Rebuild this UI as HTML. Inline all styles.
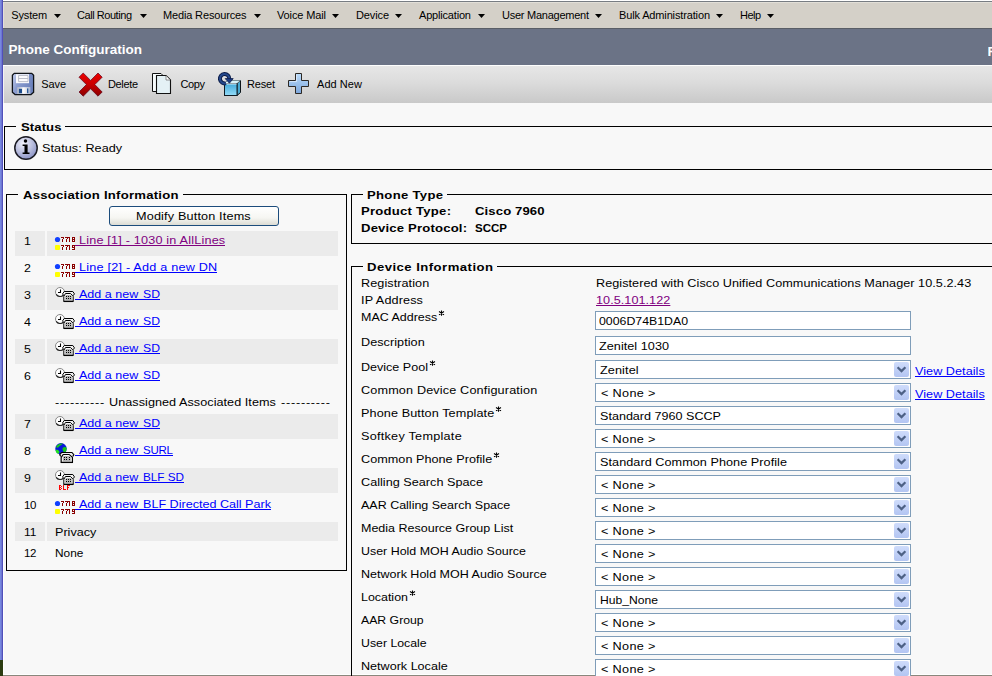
<!DOCTYPE html>
<html><head><meta charset="utf-8"><title>Phone Configuration</title>
<style>
html,body{margin:0;padding:0;width:992px;height:676px;overflow:hidden;}
.page{position:absolute;left:0;top:0;width:992px;height:676px;overflow:hidden;background:#f8f8f8;}
body{width:992px;height:676px;overflow:hidden;position:relative;background:#f8f8f8;font-family:"Liberation Sans",sans-serif;font-size:12px;color:#000;}
.abs{position:absolute;}
svg{position:absolute;overflow:visible;}
.t{position:absolute;white-space:nowrap;color:#000;transform-origin:0 0;}
.m{font-size:11px;line-height:14px;}
.b{font-size:11.5px;line-height:14px;}
.bb{font-size:11.5px;line-height:14px;font-weight:bold;}
.lg{font-size:11.5px;line-height:14px;font-weight:bold;}
.ti{font-size:13.5px;line-height:16px;font-weight:bold;color:#fff;}
.arr{position:absolute;top:14px;}
.fs{position:absolute;border:1px solid #000;box-sizing:border-box;}
.gap{position:absolute;background:#f8f8f8;height:3px;}
.rc{position:absolute;background:#ebebeb;}
.inp{position:absolute;left:595px;width:316px;height:19px;border:1px solid #7f9db9;background:#fff;box-sizing:border-box;}
.dd{position:absolute;right:1px;top:1px;}
.btn{position:absolute;left:109px;top:206px;width:170px;height:20px;box-sizing:border-box;border:1px solid #1c4c7c;border-radius:3px;background:linear-gradient(#ffffff 0%,#f6f6f2 60%,#dcdcd4 100%);}

</style></head><body>
<div class="page">
<!-- window chrome -->
<div class="abs" style="left:0;top:0;width:3px;height:660px;background:linear-gradient(90deg,#7688e0 0,#7688e0 33.3%,#7078d0 33.3%,#7078d0 66.6%,#5050bc 66.6%);"></div>
<div class="abs" style="left:0;top:660px;width:3px;height:16px;background:#2c3c12;"></div>
<div class="abs" style="left:3px;top:103px;width:1px;height:573px;background:#fff;"></div>
<div class="abs" style="left:3px;top:0;width:989px;height:1px;background:#fff;"></div>
<div class="abs" style="left:3px;top:1px;width:989px;height:1px;background:#777c82;"></div>
<!-- menu bar -->
<div class="abs" style="left:3px;top:2px;width:989px;height:26px;background:#d4d0c8;box-shadow:inset 1px 1px 0 #e2dfd8;"></div>
<div class="abs" style="left:3px;top:28px;width:989px;height:1px;background:#5a5e66;"></div>
<!-- title bar -->
<div class="abs" style="left:3px;top:29px;width:989px;height:36px;background:#6b7386;"></div>
<div class="abs" style="left:987.5px;top:43.5px;width:5px;height:16px;overflow:hidden;"><span class="t ti" style="left:0;top:0;">R</span></div>
<!-- toolbar -->
<div class="abs" style="left:3px;top:65px;width:989px;height:38px;box-shadow:inset 1px 0 0 #f2f2f2;background:linear-gradient(#f0f0f0 0,#e6e6e6 3%,#dcdcdc 45%,#c9c9c9 100%);"></div>
<div class="abs" style="left:3px;top:65px;width:989px;height:1px;background:#fdfdfd;"></div>
<!-- bottom edge -->
<div class="abs" style="left:3px;top:674px;width:989px;height:1px;background:#fff;"></div>
<div class="abs" style="left:3px;top:675px;width:989px;height:1px;background:#8a877c;"></div>
<!-- fieldsets -->
<div class="fs" style="left:4px;top:126px;width:1000px;height:44px;"></div>
<div class="gap" style="left:16px;top:125px;width:49px;"></div>
<div class="fs" style="left:6px;top:194px;width:341px;height:377px;"></div>
<div class="gap" style="left:18px;top:193px;width:165px;"></div>
<div class="fs" style="left:351px;top:194px;width:700px;height:50px;"></div>
<div class="gap" style="left:363px;top:193px;width:84px;"></div>
<div class="fs" style="left:351px;top:266px;width:700px;height:500px;"></div>
<div class="gap" style="left:363px;top:265px;width:134px;"></div>
<div class="btn"></div>
<div class="rc" style="left:15px;top:231px;width:30px;height:25px"></div><div class="rc" style="left:47px;top:231px;width:291px;height:25px"></div>
<div class="rc" style="left:15px;top:285px;width:30px;height:25px"></div><div class="rc" style="left:47px;top:285px;width:291px;height:25px"></div>
<div class="rc" style="left:15px;top:339px;width:30px;height:25px"></div><div class="rc" style="left:47px;top:339px;width:291px;height:25px"></div>
<div class="rc" style="left:15px;top:414px;width:30px;height:25px"></div><div class="rc" style="left:47px;top:414px;width:291px;height:25px"></div>
<div class="rc" style="left:15px;top:468px;width:30px;height:25px"></div><div class="rc" style="left:47px;top:468px;width:291px;height:25px"></div>
<div class="rc" style="left:15px;top:522px;width:30px;height:19px"></div><div class="rc" style="left:47px;top:522px;width:291px;height:19px"></div>
<div class="abs" style="left:75px;top:245px;width:150px;height:1px;background:#800080"></div>
<div class="abs" style="left:75px;top:272px;width:142px;height:1px;background:#0000ff"></div>
<div class="abs" style="left:75px;top:299px;width:85px;height:1px;background:#0000ff"></div>
<div class="abs" style="left:75px;top:326px;width:85px;height:1px;background:#0000ff"></div>
<div class="abs" style="left:75px;top:353px;width:85px;height:1px;background:#0000ff"></div>
<div class="abs" style="left:75px;top:380px;width:85px;height:1px;background:#0000ff"></div>
<div class="abs" style="left:75px;top:428px;width:85px;height:1px;background:#0000ff"></div>
<div class="abs" style="left:75px;top:455px;width:98px;height:1px;background:#0000ff"></div>
<div class="abs" style="left:75px;top:482px;width:109px;height:1px;background:#0000ff"></div>
<div class="abs" style="left:75px;top:509px;width:196px;height:1px;background:#0000ff"></div>
<div class="inp" style="top:311px"></div>
<div class="inp" style="top:336px"></div>
<div class="inp" style="top:360px"><svg class="dd" width="15" height="15" viewBox="0 0 15 15"><rect width="15" height="15" rx="2" fill="url(#gdd)"/><path d="M3.6 5.2L7.5 9.1L11.4 5.2" fill="none" stroke="#4d6185" stroke-width="2.2"/></svg></div>
<div class="inp" style="top:383px"><svg class="dd" width="15" height="15" viewBox="0 0 15 15"><rect width="15" height="15" rx="2" fill="url(#gdd)"/><path d="M3.6 5.2L7.5 9.1L11.4 5.2" fill="none" stroke="#4d6185" stroke-width="2.2"/></svg></div>
<div class="inp" style="top:406px"><svg class="dd" width="15" height="15" viewBox="0 0 15 15"><rect width="15" height="15" rx="2" fill="url(#gdd)"/><path d="M3.6 5.2L7.5 9.1L11.4 5.2" fill="none" stroke="#4d6185" stroke-width="2.2"/></svg></div>
<div class="inp" style="top:429px"><svg class="dd" width="15" height="15" viewBox="0 0 15 15"><rect width="15" height="15" rx="2" fill="url(#gdd)"/><path d="M3.6 5.2L7.5 9.1L11.4 5.2" fill="none" stroke="#4d6185" stroke-width="2.2"/></svg></div>
<div class="inp" style="top:452px"><svg class="dd" width="15" height="15" viewBox="0 0 15 15"><rect width="15" height="15" rx="2" fill="url(#gdd)"/><path d="M3.6 5.2L7.5 9.1L11.4 5.2" fill="none" stroke="#4d6185" stroke-width="2.2"/></svg></div>
<div class="inp" style="top:475px"><svg class="dd" width="15" height="15" viewBox="0 0 15 15"><rect width="15" height="15" rx="2" fill="url(#gdd)"/><path d="M3.6 5.2L7.5 9.1L11.4 5.2" fill="none" stroke="#4d6185" stroke-width="2.2"/></svg></div>
<div class="inp" style="top:498px"><svg class="dd" width="15" height="15" viewBox="0 0 15 15"><rect width="15" height="15" rx="2" fill="url(#gdd)"/><path d="M3.6 5.2L7.5 9.1L11.4 5.2" fill="none" stroke="#4d6185" stroke-width="2.2"/></svg></div>
<div class="inp" style="top:521px"><svg class="dd" width="15" height="15" viewBox="0 0 15 15"><rect width="15" height="15" rx="2" fill="url(#gdd)"/><path d="M3.6 5.2L7.5 9.1L11.4 5.2" fill="none" stroke="#4d6185" stroke-width="2.2"/></svg></div>
<div class="inp" style="top:544px"><svg class="dd" width="15" height="15" viewBox="0 0 15 15"><rect width="15" height="15" rx="2" fill="url(#gdd)"/><path d="M3.6 5.2L7.5 9.1L11.4 5.2" fill="none" stroke="#4d6185" stroke-width="2.2"/></svg></div>
<div class="inp" style="top:567px"><svg class="dd" width="15" height="15" viewBox="0 0 15 15"><rect width="15" height="15" rx="2" fill="url(#gdd)"/><path d="M3.6 5.2L7.5 9.1L11.4 5.2" fill="none" stroke="#4d6185" stroke-width="2.2"/></svg></div>
<div class="inp" style="top:590px"><svg class="dd" width="15" height="15" viewBox="0 0 15 15"><rect width="15" height="15" rx="2" fill="url(#gdd)"/><path d="M3.6 5.2L7.5 9.1L11.4 5.2" fill="none" stroke="#4d6185" stroke-width="2.2"/></svg></div>
<div class="inp" style="top:613px"><svg class="dd" width="15" height="15" viewBox="0 0 15 15"><rect width="15" height="15" rx="2" fill="url(#gdd)"/><path d="M3.6 5.2L7.5 9.1L11.4 5.2" fill="none" stroke="#4d6185" stroke-width="2.2"/></svg></div>
<div class="inp" style="top:636px"><svg class="dd" width="15" height="15" viewBox="0 0 15 15"><rect width="15" height="15" rx="2" fill="url(#gdd)"/><path d="M3.6 5.2L7.5 9.1L11.4 5.2" fill="none" stroke="#4d6185" stroke-width="2.2"/></svg></div>
<div class="inp" style="top:659px"><svg class="dd" width="15" height="15" viewBox="0 0 15 15"><rect width="15" height="15" rx="2" fill="url(#gdd)"/><path d="M3.6 5.2L7.5 9.1L11.4 5.2" fill="none" stroke="#4d6185" stroke-width="2.2"/></svg></div>
<svg style="left:438px;top:310px" width="7" height="6" viewBox="0 0 7 6"><path d="M3.5 .4V5.8 M1 1.5L6 4.7 M6 1.5L1 4.7" stroke="#000" stroke-width="1.05" fill="none"/></svg>
<svg style="left:429px;top:360px" width="7" height="6" viewBox="0 0 7 6"><path d="M3.5 .4V5.8 M1 1.5L6 4.7 M6 1.5L1 4.7" stroke="#000" stroke-width="1.05" fill="none"/></svg>
<svg style="left:495px;top:406px" width="7" height="6" viewBox="0 0 7 6"><path d="M3.5 .4V5.8 M1 1.5L6 4.7 M6 1.5L1 4.7" stroke="#000" stroke-width="1.05" fill="none"/></svg>
<svg style="left:493px;top:452px" width="7" height="6" viewBox="0 0 7 6"><path d="M3.5 .4V5.8 M1 1.5L6 4.7 M6 1.5L1 4.7" stroke="#000" stroke-width="1.05" fill="none"/></svg>
<svg style="left:409px;top:590px" width="7" height="6" viewBox="0 0 7 6"><path d="M3.5 .4V5.8 M1 1.5L6 4.7 M6 1.5L1 4.7" stroke="#000" stroke-width="1.05" fill="none"/></svg>
<svg width="0" height="0" style="position:absolute"><defs>
<linearGradient id="gdd" x1="0" y1="0" x2="0" y2="1"><stop offset="0" stop-color="#cfdcfb"/><stop offset="1" stop-color="#b3c5f2"/></linearGradient>
<linearGradient id="gsave" x1="0" y1="0" x2="1" y2=".35"><stop offset="0" stop-color="#ccd6f2"/><stop offset=".35" stop-color="#8c9ed0"/><stop offset="1" stop-color="#6c82bc"/></linearGradient>
<linearGradient id="gshut" x1="0" y1="0" x2="1" y2="0"><stop offset="0" stop-color="#a8b0c4"/><stop offset=".5" stop-color="#fcfcfc"/><stop offset="1" stop-color="#b4bcd0"/></linearGradient>
<linearGradient id="gx" x1="0" y1="0" x2="0" y2="1"><stop offset="0" stop-color="#ee0000"/><stop offset=".5" stop-color="#c80000"/><stop offset="1" stop-color="#8a0000"/></linearGradient>
<linearGradient id="gplus" x1="0" y1="0" x2="0" y2="1"><stop offset="0" stop-color="#bcdcfa"/><stop offset="1" stop-color="#7ca6dc"/></linearGradient>
<linearGradient id="gcube" x1="0" y1="0" x2="0" y2="1"><stop offset="0" stop-color="#40a8d8"/><stop offset="1" stop-color="#94dcf8"/></linearGradient>
<radialGradient id="ginfo" cx="0.38" cy="0.3" r="0.75"><stop offset="0" stop-color="#f4f4fc"/><stop offset="1" stop-color="#8890c4"/></radialGradient>
</defs></svg>
<!-- menu arrows -->
<svg class="arr" style="left:54px" width="7" height="4"><path d="M0 0H7L3.5 4Z"/></svg>
<svg class="arr" style="left:140px" width="7" height="4"><path d="M0 0H7L3.5 4Z"/></svg>
<svg class="arr" style="left:254px" width="7" height="4"><path d="M0 0H7L3.5 4Z"/></svg>
<svg class="arr" style="left:332px" width="7" height="4"><path d="M0 0H7L3.5 4Z"/></svg>
<svg class="arr" style="left:395px" width="7" height="4"><path d="M0 0H7L3.5 4Z"/></svg>
<svg class="arr" style="left:478px" width="7" height="4"><path d="M0 0H7L3.5 4Z"/></svg>
<svg class="arr" style="left:595px" width="7" height="4"><path d="M0 0H7L3.5 4Z"/></svg>
<svg class="arr" style="left:716px" width="7" height="4"><path d="M0 0H7L3.5 4Z"/></svg>
<svg class="arr" style="left:767px" width="7" height="4"><path d="M0 0H7L3.5 4Z"/></svg>
<!-- save -->
<svg style="left:12px;top:73px" width="22" height="22" viewBox="0 0 22 22">
<path d="M2.2 .4H19.8L21.6 2.2V19.2L19 21.6H3L.4 19.2V2.2Z" fill="url(#gsave)" stroke="#101418" stroke-width="1.3" stroke-linejoin="round"/>
<rect x="4" y="1.2" width="13" height="9" fill="#fbfbfd"/>
<path d="M6.6 2.5H16V8.6H6.6Z M6.6 5.5H16" fill="none" stroke="#b4b8c4" stroke-width=".9"/>
<rect x="5" y="14.2" width="13.3" height="6.7" fill="url(#gshut)"/>
<rect x="6.9" y="15.8" width="3.1" height="4.4" fill="#1c4c8c"/><rect x="15" y="15.4" width="1.4" height="4.8" fill="#2c5c9c"/><rect x="17" y="15.4" width=".7" height="4.8" fill="#a8b8d4"/>
</svg>
<!-- delete -->
<svg style="left:79px;top:72.8px" width="24" height="24" viewBox="0 0 24 24">
<path d="M4.2 0.0L11.6 7.4L19.0 0.0L23.2 4.2L15.8 11.6L23.2 19.0L19.0 23.2L11.6 15.8L4.2 23.2L0.0 19.0L7.4 11.6L0.0 4.2Z" fill="url(#gx)" stroke="#5c0018" stroke-width=".7"/>
</svg>
<!-- copy -->
<svg style="left:152px;top:73px" width="20" height="22" viewBox="0 0 20 22">
<path d="M.5 .5H9L11.5 3V18.5H.5Z" fill="#f6fbfc" stroke="#111" stroke-width="1"/>
<path d="M4.5 2.5H14L18.5 7V20.5H4.5Z" fill="#e4f1f5" stroke="#111" stroke-width="1.1"/>
<path d="M14 2.8V7H18.2" fill="#fff" stroke="#777" stroke-width=".8"/>
</svg>
<!-- reset -->
<svg style="left:217px;top:72px" width="25" height="25" viewBox="0 0 25 25">
<path d="M20 11.5L23.5 8.5V20.5L20 23.5Z" fill="#48a8d0" stroke="#0c1418" stroke-width="1"/>
<path d="M7.5 11.5L10.5 8.5H23.5L20 11.5Z" fill="#d8f4fc" stroke="#506870" stroke-width=".7"/>
<rect x="7.5" y="11.5" width="12.5" height="12" fill="url(#gcube)" stroke="#101c24" stroke-width="1"/>
<path d="M8 11.9H19.6" stroke="#f4fcff" stroke-width="1"/>
<path d="M12.3 7A4.7 4.7 0 1 0 8.9 11.2" fill="none" stroke="#0c1c48" stroke-width="4"/>
<path d="M12.3 7A4.7 4.7 0 1 0 8.9 11.2" fill="none" stroke="#24488c" stroke-width="2"/>
<path d="M8.2 6.6H16.2L12.4 11.2Z" fill="#1c3c84" stroke="#0c1c48" stroke-width=".8" stroke-linejoin="round"/>
</svg>
<!-- add new -->
<svg style="left:288px;top:73px" width="21" height="21" viewBox="0 0 21 21">
<path d="M7.5 .5H13.5V7.5H20.5V13.5H13.5V20.5H7.5V13.5H.5V7.5H7.5Z" fill="url(#gplus)" stroke="#2c2824" stroke-width="1"/>
<path d="M8.6 1.6V8.6H1.6" fill="none" stroke="#d8e8fc" stroke-width="1"/>
</svg>
<!-- info -->
<svg style="left:14px;top:136px" width="24" height="24" viewBox="0 0 24 24">
<circle cx="12" cy="12" r="11.2" fill="url(#ginfo)" stroke="#1c1c24" stroke-width="1.5"/>
<circle cx="11.5" cy="5.1" r="1.75" fill="#000"/>
<path d="M8.6 8.6H13.6V16.5H15.5V17.9H8.6V16.5H10.5V10H8.6Z" fill="#000"/>
</svg>
<svg style="left:55px;top:237px" width="21" height="13" viewBox="0 0 21 13" shape-rendering="crispEdges"><rect x="5.5" y="-0.5" width="14.5" height="14" fill="#f2fafa" opacity=".7"/><circle cx="2.5" cy="2.5" r="2.6" fill="#1040ff" shape-rendering="auto"/><rect x="0" y="8" width="5" height="5" rx="1" fill="#ffff00" shape-rendering="auto"/><rect x="6" y="0" width="3" height="1" fill="#8b0000"/><rect x="8" y="1" width="1" height="1" fill="#8b0000"/><rect x="7" y="2" width="1" height="3" fill="#8b0000"/><rect x="10" y="0" width="5" height="1" fill="#8b0000"/><rect x="12" y="1" width="1" height="1" fill="#8b0000"/><rect x="11" y="2" width="1" height="3" fill="#8b0000"/><rect x="14" y="1" width="1" height="4" fill="#8b0000"/><rect x="17" y="0" width="3" height="1" fill="#8b0000"/><rect x="17" y="1" width="1" height="1" fill="#8b0000"/><rect x="19" y="1" width="1" height="1" fill="#8b0000"/><rect x="17" y="2" width="3" height="1" fill="#8b0000"/><rect x="17" y="3" width="1" height="1" fill="#8b0000"/><rect x="19" y="3" width="1" height="1" fill="#8b0000"/><rect x="17" y="4" width="3" height="1" fill="#8b0000"/><rect x="6" y="8" width="3" height="1" fill="#8b0000"/><rect x="8" y="9" width="1" height="1" fill="#8b0000"/><rect x="7" y="10" width="1" height="3" fill="#8b0000"/><rect x="10" y="8" width="5" height="1" fill="#8b0000"/><rect x="12" y="9" width="1" height="1" fill="#8b0000"/><rect x="11" y="10" width="1" height="3" fill="#8b0000"/><rect x="14" y="9" width="1" height="4" fill="#8b0000"/><rect x="17" y="8" width="3" height="1" fill="#8b0000"/><rect x="17" y="9" width="1" height="1" fill="#8b0000"/><rect x="19" y="9" width="1" height="1" fill="#8b0000"/><rect x="17" y="10" width="3" height="1" fill="#8b0000"/><rect x="19" y="11" width="1" height="1" fill="#8b0000"/><rect x="17" y="12" width="3" height="1" fill="#8b0000"/></svg>
<svg style="left:55px;top:264px" width="21" height="13" viewBox="0 0 21 13" shape-rendering="crispEdges"><rect x="5.5" y="-0.5" width="14.5" height="14" fill="#f2fafa" opacity=".7"/><circle cx="2.5" cy="2.5" r="2.6" fill="#1040ff" shape-rendering="auto"/><rect x="0" y="8" width="5" height="5" rx="1" fill="#ffff00" shape-rendering="auto"/><rect x="6" y="0" width="3" height="1" fill="#8b0000"/><rect x="8" y="1" width="1" height="1" fill="#8b0000"/><rect x="7" y="2" width="1" height="3" fill="#8b0000"/><rect x="10" y="0" width="5" height="1" fill="#8b0000"/><rect x="12" y="1" width="1" height="1" fill="#8b0000"/><rect x="11" y="2" width="1" height="3" fill="#8b0000"/><rect x="14" y="1" width="1" height="4" fill="#8b0000"/><rect x="17" y="0" width="3" height="1" fill="#8b0000"/><rect x="17" y="1" width="1" height="1" fill="#8b0000"/><rect x="19" y="1" width="1" height="1" fill="#8b0000"/><rect x="17" y="2" width="3" height="1" fill="#8b0000"/><rect x="17" y="3" width="1" height="1" fill="#8b0000"/><rect x="19" y="3" width="1" height="1" fill="#8b0000"/><rect x="17" y="4" width="3" height="1" fill="#8b0000"/><rect x="6" y="8" width="3" height="1" fill="#8b0000"/><rect x="8" y="9" width="1" height="1" fill="#8b0000"/><rect x="7" y="10" width="1" height="3" fill="#8b0000"/><rect x="10" y="8" width="5" height="1" fill="#8b0000"/><rect x="12" y="9" width="1" height="1" fill="#8b0000"/><rect x="11" y="10" width="1" height="3" fill="#8b0000"/><rect x="14" y="9" width="1" height="4" fill="#8b0000"/><rect x="17" y="8" width="3" height="1" fill="#8b0000"/><rect x="17" y="9" width="1" height="1" fill="#8b0000"/><rect x="19" y="9" width="1" height="1" fill="#8b0000"/><rect x="17" y="10" width="3" height="1" fill="#8b0000"/><rect x="19" y="11" width="1" height="1" fill="#8b0000"/><rect x="17" y="12" width="3" height="1" fill="#8b0000"/></svg>
<svg style="left:55px;top:287px" width="21" height="21" viewBox="0 0 21 21"><circle cx="5" cy="5" r="4.5" fill="#fff" stroke="#888" stroke-width="1"/><path d="M1.2 7.4A4.5 4.5 0 0 0 8.6 7.8" fill="none" stroke="#222" stroke-width="1.1"/><path d="M5.5 2.4V5.5H3" fill="none" stroke="#000" stroke-width="1.1"/><g transform="translate(7,4)"><path d="M1.6 4.6L.6 2.8L2.2 .5H10.8L12.4 2.8L11.4 4.6" fill="#f0f0f0" stroke="#000" stroke-width="1" stroke-linejoin="round"/><path d="M3.5 2.5H8.5L11.2 5.4V10.4H1.8V5.4Z" fill="#fafafa" stroke="#000" stroke-width="1" stroke-linejoin="round"/><path d="M3.2 5.2L4 4H8.4L9.8 5.2V9.6H3.2Z" fill="#b4b4b4"/><path d="M1.6 10.4H11.4" stroke="#000" stroke-width="1.3"/><g fill="#000" shape-rendering="crispEdges"><rect x="4" y="5" width="1" height="1"/><rect x="6" y="5" width="1" height="1"/><rect x="8" y="5" width="1" height="1"/><rect x="4" y="7" width="1" height="1"/><rect x="6" y="7" width="1" height="1"/><rect x="8" y="7" width="1" height="1"/></g></g></svg>
<svg style="left:55px;top:314px" width="21" height="21" viewBox="0 0 21 21"><circle cx="5" cy="5" r="4.5" fill="#fff" stroke="#888" stroke-width="1"/><path d="M1.2 7.4A4.5 4.5 0 0 0 8.6 7.8" fill="none" stroke="#222" stroke-width="1.1"/><path d="M5.5 2.4V5.5H3" fill="none" stroke="#000" stroke-width="1.1"/><g transform="translate(7,4)"><path d="M1.6 4.6L.6 2.8L2.2 .5H10.8L12.4 2.8L11.4 4.6" fill="#f0f0f0" stroke="#000" stroke-width="1" stroke-linejoin="round"/><path d="M3.5 2.5H8.5L11.2 5.4V10.4H1.8V5.4Z" fill="#fafafa" stroke="#000" stroke-width="1" stroke-linejoin="round"/><path d="M3.2 5.2L4 4H8.4L9.8 5.2V9.6H3.2Z" fill="#b4b4b4"/><path d="M1.6 10.4H11.4" stroke="#000" stroke-width="1.3"/><g fill="#000" shape-rendering="crispEdges"><rect x="4" y="5" width="1" height="1"/><rect x="6" y="5" width="1" height="1"/><rect x="8" y="5" width="1" height="1"/><rect x="4" y="7" width="1" height="1"/><rect x="6" y="7" width="1" height="1"/><rect x="8" y="7" width="1" height="1"/></g></g></svg>
<svg style="left:55px;top:341px" width="21" height="21" viewBox="0 0 21 21"><circle cx="5" cy="5" r="4.5" fill="#fff" stroke="#888" stroke-width="1"/><path d="M1.2 7.4A4.5 4.5 0 0 0 8.6 7.8" fill="none" stroke="#222" stroke-width="1.1"/><path d="M5.5 2.4V5.5H3" fill="none" stroke="#000" stroke-width="1.1"/><g transform="translate(7,4)"><path d="M1.6 4.6L.6 2.8L2.2 .5H10.8L12.4 2.8L11.4 4.6" fill="#f0f0f0" stroke="#000" stroke-width="1" stroke-linejoin="round"/><path d="M3.5 2.5H8.5L11.2 5.4V10.4H1.8V5.4Z" fill="#fafafa" stroke="#000" stroke-width="1" stroke-linejoin="round"/><path d="M3.2 5.2L4 4H8.4L9.8 5.2V9.6H3.2Z" fill="#b4b4b4"/><path d="M1.6 10.4H11.4" stroke="#000" stroke-width="1.3"/><g fill="#000" shape-rendering="crispEdges"><rect x="4" y="5" width="1" height="1"/><rect x="6" y="5" width="1" height="1"/><rect x="8" y="5" width="1" height="1"/><rect x="4" y="7" width="1" height="1"/><rect x="6" y="7" width="1" height="1"/><rect x="8" y="7" width="1" height="1"/></g></g></svg>
<svg style="left:55px;top:368px" width="21" height="21" viewBox="0 0 21 21"><circle cx="5" cy="5" r="4.5" fill="#fff" stroke="#888" stroke-width="1"/><path d="M1.2 7.4A4.5 4.5 0 0 0 8.6 7.8" fill="none" stroke="#222" stroke-width="1.1"/><path d="M5.5 2.4V5.5H3" fill="none" stroke="#000" stroke-width="1.1"/><g transform="translate(7,4)"><path d="M1.6 4.6L.6 2.8L2.2 .5H10.8L12.4 2.8L11.4 4.6" fill="#f0f0f0" stroke="#000" stroke-width="1" stroke-linejoin="round"/><path d="M3.5 2.5H8.5L11.2 5.4V10.4H1.8V5.4Z" fill="#fafafa" stroke="#000" stroke-width="1" stroke-linejoin="round"/><path d="M3.2 5.2L4 4H8.4L9.8 5.2V9.6H3.2Z" fill="#b4b4b4"/><path d="M1.6 10.4H11.4" stroke="#000" stroke-width="1.3"/><g fill="#000" shape-rendering="crispEdges"><rect x="4" y="5" width="1" height="1"/><rect x="6" y="5" width="1" height="1"/><rect x="8" y="5" width="1" height="1"/><rect x="4" y="7" width="1" height="1"/><rect x="6" y="7" width="1" height="1"/><rect x="8" y="7" width="1" height="1"/></g></g></svg>
<svg style="left:55px;top:416px" width="21" height="21" viewBox="0 0 21 21"><circle cx="5" cy="5" r="4.5" fill="#fff" stroke="#888" stroke-width="1"/><path d="M1.2 7.4A4.5 4.5 0 0 0 8.6 7.8" fill="none" stroke="#222" stroke-width="1.1"/><path d="M5.5 2.4V5.5H3" fill="none" stroke="#000" stroke-width="1.1"/><g transform="translate(7,4)"><path d="M1.6 4.6L.6 2.8L2.2 .5H10.8L12.4 2.8L11.4 4.6" fill="#f0f0f0" stroke="#000" stroke-width="1" stroke-linejoin="round"/><path d="M3.5 2.5H8.5L11.2 5.4V10.4H1.8V5.4Z" fill="#fafafa" stroke="#000" stroke-width="1" stroke-linejoin="round"/><path d="M3.2 5.2L4 4H8.4L9.8 5.2V9.6H3.2Z" fill="#b4b4b4"/><path d="M1.6 10.4H11.4" stroke="#000" stroke-width="1.3"/><g fill="#000" shape-rendering="crispEdges"><rect x="4" y="5" width="1" height="1"/><rect x="6" y="5" width="1" height="1"/><rect x="8" y="5" width="1" height="1"/><rect x="4" y="7" width="1" height="1"/><rect x="6" y="7" width="1" height="1"/><rect x="8" y="7" width="1" height="1"/></g></g></svg>
<svg style="left:55px;top:443px" width="21" height="20" viewBox="0 0 21 20"><circle cx="6" cy="5.8" r="5.7" fill="#0818d8"/><path d="M1 4C2 1.5 5 .2 8 .6C7 2 5 2.2 4.2 3.6C3.4 5 2 4.8 1 4Z" fill="#18c818"/><path d="M.6 7C2 6.4 3.6 7 4.4 8.6C4.6 10 3.4 11 2.4 10.6C1.2 9.8 .6 8.4 .6 7Z" fill="#20e020"/><path d="M7.6 5C9 3.6 11 3.6 11.6 5C11.8 7 11 9 9.6 10C8.6 8.6 7 7 7.6 5Z" fill="#18c818"/><g transform="translate(4,9) scale(1.2,1)"><path d="M1.6 4.6L.6 2.8L2.2 .5H10.8L12.4 2.8L11.4 4.6" fill="#f0f0f0" stroke="#000" stroke-width="1" stroke-linejoin="round"/><path d="M3.5 2.5H8.5L11.2 5.4V10.4H1.8V5.4Z" fill="#fafafa" stroke="#000" stroke-width="1" stroke-linejoin="round"/><path d="M3.2 5.2L4 4H8.4L9.8 5.2V9.6H3.2Z" fill="#b4b4b4"/><path d="M1.6 10.4H11.4" stroke="#000" stroke-width="1.3"/><g fill="#000" shape-rendering="crispEdges"><rect x="4" y="5" width="1" height="1"/><rect x="6" y="5" width="1" height="1"/><rect x="8" y="5" width="1" height="1"/><rect x="4" y="7" width="1" height="1"/><rect x="6" y="7" width="1" height="1"/><rect x="8" y="7" width="1" height="1"/></g></g></svg>
<svg style="left:55px;top:470px" width="21" height="21" viewBox="0 0 21 21"><circle cx="5" cy="5" r="4.5" fill="#fff" stroke="#888" stroke-width="1"/><path d="M1.2 7.4A4.5 4.5 0 0 0 8.6 7.8" fill="none" stroke="#222" stroke-width="1.1"/><path d="M5.5 2.4V5.5H3" fill="none" stroke="#000" stroke-width="1.1"/><g transform="translate(7,4)"><path d="M1.6 4.6L.6 2.8L2.2 .5H10.8L12.4 2.8L11.4 4.6" fill="#f0f0f0" stroke="#000" stroke-width="1" stroke-linejoin="round"/><path d="M3.5 2.5H8.5L11.2 5.4V10.4H1.8V5.4Z" fill="#fafafa" stroke="#000" stroke-width="1" stroke-linejoin="round"/><path d="M3.2 5.2L4 4H8.4L9.8 5.2V9.6H3.2Z" fill="#b4b4b4"/><path d="M1.6 10.4H11.4" stroke="#000" stroke-width="1.3"/><g fill="#000" shape-rendering="crispEdges"><rect x="4" y="5" width="1" height="1"/><rect x="6" y="5" width="1" height="1"/><rect x="8" y="5" width="1" height="1"/><rect x="4" y="7" width="1" height="1"/><rect x="6" y="7" width="1" height="1"/><rect x="8" y="7" width="1" height="1"/></g></g><g shape-rendering="crispEdges"><rect x="4" y="15" width="1" height="5" fill="#ff0000"/><rect x="5" y="15" width="1" height="1" fill="#ff0000"/><rect x="5" y="17" width="1" height="1" fill="#ff0000"/><rect x="5" y="19" width="1" height="1" fill="#ff0000"/><rect x="6" y="16" width="1" height="1" fill="#ff0000"/><rect x="6" y="18" width="1" height="1" fill="#ff0000"/><rect x="8" y="15" width="1" height="5" fill="#ff0000"/><rect x="9" y="19" width="2" height="1" fill="#ff0000"/><rect x="12" y="15" width="1" height="5" fill="#ff0000"/><rect x="13" y="15" width="2" height="1" fill="#ff0000"/><rect x="13" y="17" width="1" height="1" fill="#ff0000"/></g></svg>
<svg style="left:55px;top:501px" width="21" height="13" viewBox="0 0 21 13" shape-rendering="crispEdges"><rect x="5.5" y="-0.5" width="14.5" height="14" fill="#f2fafa" opacity=".7"/><circle cx="2.5" cy="2.5" r="2.6" fill="#1040ff" shape-rendering="auto"/><rect x="0" y="8" width="5" height="5" rx="1" fill="#ffff00" shape-rendering="auto"/><rect x="6" y="0" width="3" height="1" fill="#8b0000"/><rect x="8" y="1" width="1" height="1" fill="#8b0000"/><rect x="7" y="2" width="1" height="3" fill="#8b0000"/><rect x="10" y="0" width="5" height="1" fill="#8b0000"/><rect x="12" y="1" width="1" height="1" fill="#8b0000"/><rect x="11" y="2" width="1" height="3" fill="#8b0000"/><rect x="14" y="1" width="1" height="4" fill="#8b0000"/><rect x="17" y="0" width="3" height="1" fill="#8b0000"/><rect x="17" y="1" width="1" height="1" fill="#8b0000"/><rect x="19" y="1" width="1" height="1" fill="#8b0000"/><rect x="17" y="2" width="3" height="1" fill="#8b0000"/><rect x="17" y="3" width="1" height="1" fill="#8b0000"/><rect x="19" y="3" width="1" height="1" fill="#8b0000"/><rect x="17" y="4" width="3" height="1" fill="#8b0000"/><rect x="6" y="8" width="3" height="1" fill="#8b0000"/><rect x="8" y="9" width="1" height="1" fill="#8b0000"/><rect x="7" y="10" width="1" height="3" fill="#8b0000"/><rect x="10" y="8" width="5" height="1" fill="#8b0000"/><rect x="12" y="9" width="1" height="1" fill="#8b0000"/><rect x="11" y="10" width="1" height="3" fill="#8b0000"/><rect x="14" y="9" width="1" height="4" fill="#8b0000"/><rect x="17" y="8" width="3" height="1" fill="#8b0000"/><rect x="17" y="9" width="1" height="1" fill="#8b0000"/><rect x="19" y="9" width="1" height="1" fill="#8b0000"/><rect x="17" y="10" width="3" height="1" fill="#8b0000"/><rect x="19" y="11" width="1" height="1" fill="#8b0000"/><rect x="17" y="12" width="3" height="1" fill="#8b0000"/></svg>
<span class="t m" style="left:11.25px;top:8.00px;letter-spacing:-0.138px;">System</span>
<span class="t m" style="left:77.00px;top:8.00px;letter-spacing:-0.447px;">Call Routing</span>
<span class="t m" style="left:163.00px;top:8.00px;letter-spacing:-0.150px;">Media Resources</span>
<span class="t m" style="left:277.00px;top:8.00px;letter-spacing:-0.127px;">Voice Mail</span>
<span class="t m" style="left:356.00px;top:8.00px;letter-spacing:-0.125px;">Device</span>
<span class="t m" style="left:419.00px;top:8.00px;letter-spacing:-0.183px;">Application</span>
<span class="t m" style="left:502.00px;top:8.00px;letter-spacing:-0.250px;">User Management</span>
<span class="t m" style="left:619.00px;top:8.00px;letter-spacing:-0.141px;">Bulk Administration</span>
<span class="t m" style="left:740.00px;top:8.00px;letter-spacing:-0.542px;">Help</span>
<span class="t m" style="left:41.25px;top:77.00px;letter-spacing:-0.109px;">Save</span>
<span class="t m" style="left:108.00px;top:77.00px;letter-spacing:-0.359px;">Delete</span>
<span class="t m" style="left:180.60px;top:77.00px;letter-spacing:-0.429px;">Copy</span>
<span class="t m" style="left:247.00px;top:77.00px;letter-spacing:-0.188px;">Reset</span>
<span class="t m" style="left:317.00px;top:77.00px;letter-spacing:0.060px;">Add New</span>
<span class="t ti" style="left:8.50px;top:41.50px;">Phone Configuration</span>
<span class="t lg" style="left:20.50px;top:120.00px;letter-spacing:0.074px;transform:scaleX(1.1400);">Status</span>
<span class="t lg" style="left:22.50px;top:188.00px;letter-spacing:0.217px;transform:scaleX(1.1400);">Association Information</span>
<span class="t lg" style="left:367.00px;top:188.00px;letter-spacing:0.260px;transform:scaleX(1.1400);">Phone Type</span>
<span class="t lg" style="left:367.00px;top:260.00px;letter-spacing:0.411px;transform:scaleX(1.1400);">Device Information</span>
<span class="t b" style="left:42.30px;top:141.00px;letter-spacing:0.056px;transform:scaleX(1.1000);">Status: Ready</span>
<span class="t bb" style="left:361.00px;top:204.00px;letter-spacing:0.207px;transform:scaleX(1.1400);">Product Type:</span>
<span class="t bb" style="left:475.00px;top:204.00px;letter-spacing:0.095px;transform:scaleX(1.1400);">Cisco 7960</span>
<span class="t bb" style="left:361.00px;top:221.00px;letter-spacing:0.149px;transform:scaleX(1.1400);">Device Protocol:</span>
<span class="t bb" style="left:475.00px;top:221.00px;">SCCP</span>
<span class="t b" style="left:360.80px;top:276.00px;letter-spacing:0.057px;transform:scaleX(1.1000);">Registration</span>
<span class="t b" style="left:360.80px;top:293.00px;letter-spacing:0.101px;transform:scaleX(1.1000);">IP Address</span>
<span class="t b" style="left:360.80px;top:310.00px;transform:scaleX(1.0837);">MAC Address</span>
<span class="t b" style="left:360.80px;top:335.00px;letter-spacing:0.038px;transform:scaleX(1.1000);">Description</span>
<span class="t b" style="left:360.80px;top:360.00px;transform:scaleX(1.0908);">Device Pool</span>
<span class="t b" style="left:360.80px;top:383.00px;letter-spacing:0.137px;transform:scaleX(1.1000);">Common Device Configuration</span>
<span class="t b" style="left:360.80px;top:406.00px;letter-spacing:0.087px;transform:scaleX(1.1000);">Phone Button Template</span>
<span class="t b" style="left:360.80px;top:429.00px;letter-spacing:0.235px;transform:scaleX(1.1000);">Softkey Template</span>
<span class="t b" style="left:360.80px;top:452.00px;letter-spacing:0.019px;transform:scaleX(1.1000);">Common Phone Profile</span>
<span class="t b" style="left:360.80px;top:475.00px;letter-spacing:0.014px;transform:scaleX(1.1000);">Calling Search Space</span>
<span class="t b" style="left:360.80px;top:498.00px;transform:scaleX(1.0856);">AAR Calling Search Space</span>
<span class="t b" style="left:360.80px;top:521.00px;transform:scaleX(1.0873);">Media Resource Group List</span>
<span class="t b" style="left:360.80px;top:544.00px;transform:scaleX(1.0798);">User Hold MOH Audio Source</span>
<span class="t b" style="left:360.80px;top:567.00px;transform:scaleX(1.0882);">Network Hold MOH Audio Source</span>
<span class="t b" style="left:360.80px;top:590.00px;transform:scaleX(1.0797);">Location</span>
<span class="t b" style="left:360.80px;top:613.00px;transform:scaleX(1.0661);">AAR Group</span>
<span class="t b" style="left:360.80px;top:636.00px;transform:scaleX(1.0705);">User Locale</span>
<span class="t b" style="left:360.80px;top:659.00px;transform:scaleX(1.0938);">Network Locale</span>
<span class="t b" style="left:595.50px;top:276.00px;letter-spacing:0.038px;transform:scaleX(1.1000);">Registered with Cisco Unified Communications Manager 10.5.2.43</span>
<a class="t b" style="left:595.50px;top:293.00px;letter-spacing:0.035px;transform:scaleX(1.1000);color:#800080;text-decoration:underline;">10.5.101.122</a>
<span class="t b" style="left:598.60px;top:314.00px;transform:scaleX(1.0707);">0006D74B1DA0</span>
<span class="t b" style="left:598.60px;top:339.00px;letter-spacing:0.031px;transform:scaleX(1.1000);">Zenitel 1030</span>
<span class="t b" style="left:600.00px;top:362.50px;letter-spacing:0.093px;transform:scaleX(1.1000);">Zenitel</span>
<span class="t b" style="left:600.50px;top:385.50px;letter-spacing:0.317px;transform:scaleX(1.1000);">&lt; None &gt;</span>
<span class="t b" style="left:600.00px;top:408.50px;transform:scaleX(1.0939);">Standard 7960 SCCP</span>
<span class="t b" style="left:600.50px;top:431.50px;letter-spacing:0.317px;transform:scaleX(1.1000);">&lt; None &gt;</span>
<span class="t b" style="left:600.00px;top:454.50px;letter-spacing:0.044px;transform:scaleX(1.1000);">Standard Common Phone Profile</span>
<span class="t b" style="left:600.50px;top:477.50px;letter-spacing:0.317px;transform:scaleX(1.1000);">&lt; None &gt;</span>
<span class="t b" style="left:600.50px;top:500.50px;letter-spacing:0.317px;transform:scaleX(1.1000);">&lt; None &gt;</span>
<span class="t b" style="left:600.50px;top:523.50px;letter-spacing:0.317px;transform:scaleX(1.1000);">&lt; None &gt;</span>
<span class="t b" style="left:600.50px;top:546.50px;letter-spacing:0.317px;transform:scaleX(1.1000);">&lt; None &gt;</span>
<span class="t b" style="left:600.50px;top:569.50px;letter-spacing:0.317px;transform:scaleX(1.1000);">&lt; None &gt;</span>
<span class="t b" style="left:600.00px;top:592.50px;transform:scaleX(1.0548);">Hub_None</span>
<span class="t b" style="left:600.50px;top:615.50px;letter-spacing:0.317px;transform:scaleX(1.1000);">&lt; None &gt;</span>
<span class="t b" style="left:600.50px;top:638.50px;letter-spacing:0.317px;transform:scaleX(1.1000);">&lt; None &gt;</span>
<span class="t b" style="left:600.50px;top:661.50px;letter-spacing:0.317px;transform:scaleX(1.1000);">&lt; None &gt;</span>
<a class="t b" style="left:915.25px;top:364.00px;letter-spacing:0.030px;transform:scaleX(1.1000);color:#0000ff;text-decoration:underline;">View Details</a>
<a class="t b" style="left:915.25px;top:387.00px;letter-spacing:0.030px;transform:scaleX(1.1000);color:#0000ff;text-decoration:underline;">View Details</a>
<span class="t b" style="left:136.30px;top:208.50px;letter-spacing:0.147px;transform:scaleX(1.1000);">Modify Button Items</span>
<span class="t b" style="left:23.60px;top:233.50px;transform:scaleX(1.0800);">1</span>
<span class="t b" style="left:23.60px;top:260.50px;transform:scaleX(1.0800);">2</span>
<span class="t b" style="left:23.60px;top:287.50px;transform:scaleX(1.0800);">3</span>
<span class="t b" style="left:23.60px;top:314.50px;transform:scaleX(1.0800);">4</span>
<span class="t b" style="left:23.60px;top:341.50px;transform:scaleX(1.0800);">5</span>
<span class="t b" style="left:23.60px;top:368.50px;transform:scaleX(1.0800);">6</span>
<span class="t b" style="left:23.60px;top:416.50px;transform:scaleX(1.0800);">7</span>
<span class="t b" style="left:23.60px;top:443.50px;transform:scaleX(1.0800);">8</span>
<span class="t b" style="left:23.60px;top:470.50px;transform:scaleX(1.0800);">9</span>
<span class="t b" style="left:24.00px;top:497.50px;letter-spacing:-0.397px;">10</span>
<span class="t b" style="left:24.00px;top:524.50px;transform:scaleX(1.0374);">11</span>
<span class="t b" style="left:24.00px;top:545.50px;letter-spacing:-0.397px;">12</span>
<span class="t b" style="left:55.40px;top:395.00px;letter-spacing:0.714px;transform:scaleX(1.1000);">----------</span>
<span class="t b" style="left:109.10px;top:395.00px;letter-spacing:0.033px;transform:scaleX(1.1000);">Unassigned Associated Items</span>
<span class="t b" style="left:280.70px;top:395.00px;letter-spacing:0.694px;transform:scaleX(1.1000);">----------</span>
<span class="t b" style="left:55.40px;top:524.50px;transform:scaleX(1.0954);">Privacy</span>
<span class="t b" style="left:55.40px;top:545.50px;transform:scaleX(1.0291);">None</span>
<a class="t b" style="left:78.80px;top:233.00px;letter-spacing:0.169px;transform:scaleX(1.1000);color:#800080;">Line [1] - 1030 in AllLines</a>
<a class="t b" style="left:78.80px;top:260.00px;letter-spacing:0.189px;transform:scaleX(1.1000);color:#0000ff;">Line [2] - Add a new DN</a>
<a class="t b" style="left:78.80px;top:287.00px;transform:scaleX(1.0890);color:#0000ff;">Add a new</a>
<a class="t b" style="left:143.00px;top:287.00px;transform:scaleX(1.0635);color:#0000ff;">SD</a>
<a class="t b" style="left:78.80px;top:314.00px;transform:scaleX(1.0890);color:#0000ff;">Add a new</a>
<a class="t b" style="left:143.00px;top:314.00px;transform:scaleX(1.0635);color:#0000ff;">SD</a>
<a class="t b" style="left:78.80px;top:341.00px;transform:scaleX(1.0890);color:#0000ff;">Add a new</a>
<a class="t b" style="left:143.00px;top:341.00px;transform:scaleX(1.0635);color:#0000ff;">SD</a>
<a class="t b" style="left:78.80px;top:368.00px;transform:scaleX(1.0890);color:#0000ff;">Add a new</a>
<a class="t b" style="left:143.00px;top:368.00px;transform:scaleX(1.0635);color:#0000ff;">SD</a>
<a class="t b" style="left:78.80px;top:416.00px;transform:scaleX(1.0890);color:#0000ff;">Add a new</a>
<a class="t b" style="left:143.00px;top:416.00px;transform:scaleX(1.0635);color:#0000ff;">SD</a>
<a class="t b" style="left:78.80px;top:443.00px;transform:scaleX(1.0890);color:#0000ff;">Add a new</a>
<a class="t b" style="left:143.00px;top:443.00px;letter-spacing:-0.229px;color:#0000ff;">SURL</a>
<a class="t b" style="left:78.80px;top:470.00px;transform:scaleX(1.0890);color:#0000ff;">Add a new</a>
<a class="t b" style="left:143.00px;top:470.00px;transform:scaleX(1.0182);color:#0000ff;">BLF SD</a>
<a class="t b" style="left:78.80px;top:497.00px;transform:scaleX(1.0890);color:#0000ff;">Add a new</a>
<a class="t b" style="left:143.00px;top:497.00px;transform:scaleX(1.0943);color:#0000ff;">BLF Directed Call Park</a>
</div>
</body></html>
